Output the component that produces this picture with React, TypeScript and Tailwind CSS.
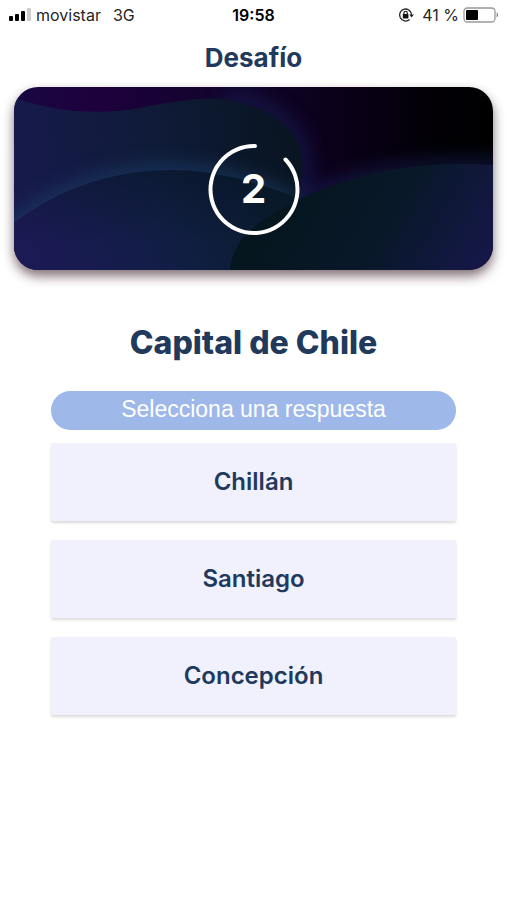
import { useState } from "react";

const answers = ["Chillán", "Santiago", "Concepción"];

const StatusBar = () => {
  return (
    <div className="grid grid-cols-3 items-center h-[30px] pl-2 pr-2 text-base text-neutral-800">
      <div className="flex items-center gap-1 whitespace-nowrap">
        <svg width="24" height="14" viewBox="0 0 24 14" aria-hidden="true">
          <rect x="1" y="8" width="4" height="5" rx="1" fill="#000" />
          <rect x="7" y="6" width="4" height="7" rx="1" fill="#000" />
          <rect x="13" y="3" width="4" height="10" rx="1" fill="#000" />
          <rect x="19" y="0" width="4" height="13" rx="1" fill="#ccc" />
        </svg>
        <span>movistar</span>
        <span className="ml-2">3G</span>
      </div>
      <p className="text-center font-semibold text-black">19:58</p>
      <div className="flex items-center justify-end gap-1 whitespace-nowrap">
        <svg className="mr-1" width="16" height="16" viewBox="0 0 16 16" fill="none" aria-hidden="true">
          <path d="M11.6 12.5A6 6 0 1 1 13.6 8.2" stroke="#222" strokeWidth="1.3" />
          <path d="M11.3 7.6h4.6l-2.3 3z" fill="#222" />
          <rect x="4.8" y="7" width="5.6" height="4.4" rx=".6" fill="#111" />
          <path d="M5.9 7.2V6a1.7 1.7 0 0 1 3.4 0v1.2" stroke="#111" strokeWidth="1.1" />
        </svg>
        <span>41 %</span>
        <svg width="36" height="16" viewBox="0 0 36 16" fill="none" aria-hidden="true">
          <rect x="1" y="1" width="31" height="14" rx="3.5" stroke="#999" strokeWidth="1.3" />
          <rect x="3" y="3" width="12" height="10" rx="1" fill="#000" />
          <path d="M33.6 5.6c2 .6 2 4.2 0 4.8z" fill="#888" />
        </svg>
      </div>
    </div>
  );
};

const Waves = () => {
  return (
    <svg
      className="absolute inset-0 w-full h-full"
      viewBox="0 0 479 183"
      preserveAspectRatio="none"
      aria-hidden="true"
    >
      <defs>
        <linearGradient id="sky" x1="0" y1="0" x2="479" y2="0" gradientUnits="userSpaceOnUse">
          <stop offset="0" stopColor="#190842" />
          <stop offset=".18" stopColor="#1d003c" />
          <stop offset=".45" stopColor="#11052c" />
          <stop offset=".68" stopColor="#0b0019" />
          <stop offset=".88" stopColor="#020006" />
          <stop offset="1" stopColor="#000" />
        </linearGradient>
        <linearGradient id="middle" x1="0" y1="90" x2="290" y2="40" gradientUnits="userSpaceOnUse">
          <stop offset="0" stopColor="#171a4c" />
          <stop offset=".5" stopColor="#0f1b38" />
          <stop offset="1" stopColor="#08141f" />
        </linearGradient>
        <linearGradient id="front" x1="30" y1="183" x2="270" y2="90" gradientUnits="userSpaceOnUse">
          <stop offset="0" stopColor="#1b1a54" />
          <stop offset=".5" stopColor="#111e44" />
          <stop offset="1" stopColor="#091b2a" />
        </linearGradient>
        <linearGradient id="right" x1="280" y1="80" x2="470" y2="190" gradientUnits="userSpaceOnUse">
          <stop offset="0" stopColor="#05161e" />
          <stop offset=".5" stopColor="#091829" />
          <stop offset="1" stopColor="#16174a" />
        </linearGradient>
        <linearGradient id="shade" x1="0" y1="0" x2="0" y2="183" gradientUnits="userSpaceOnUse">
          <stop offset=".4" stopColor="#03101a" stopOpacity=".4" />
          <stop offset=".85" stopColor="#03101a" stopOpacity="0" />
        </linearGradient>
        <filter
          id="soft"
          filterUnits="userSpaceOnUse"
          x="-60"
          y="-60"
          width="620"
          height="300"
          colorInterpolationFilters="sRGB"
        >
          <feGaussianBlur stdDeviation="9" />
        </filter>
      </defs>
      <rect width="479" height="183" fill="url(#sky)" />
      <path
        d="M210 12C250 14 284 36 289 68C292 88 286 108 288 114C330 92 390 76 500 78"
        stroke="#1b2460"
        strokeOpacity=".6"
        strokeWidth="14"
        fill="none"
        filter="url(#soft)"
      />
      <path
        d="M0 11C40 24 80 29 125 21C160 15 180 10 210 12C255 18 290 44 288 78C287 95 284 110 280 183H0Z"
        fill="url(#middle)"
      />
      <path
        d="M-30 160C45 102 95 88 150 86C205 85 245 102 282 116"
        stroke="#1a3b62"
        strokeOpacity=".7"
        strokeWidth="20"
        fill="none"
        filter="url(#soft)"
      />
      <path d="M0 136C45 102 95 84 155 83C210 83 250 99 290 113V183H0Z" fill="url(#front)" />
      <path d="M0 136C45 102 95 84 155 83C210 83 250 99 290 113V183H0Z" fill="url(#shade)" />
      <path d="M216 183C217 166 226 150 246 135C300 100 370 71 479 78V183Z" fill="url(#right)" />
    </svg>
  );
};

const Countdown = ({ seconds }: { seconds: number }) => {
  return (
    <div className="relative grid place-items-center size-[92px]" role="timer">
      <svg className="col-start-1 row-start-1" width="92" height="92" viewBox="0 0 92 92" fill="none" aria-hidden="true">
        <path
          d="M47 3A43.5 43.5 0 1 0 77.5 16.5"
          stroke="#fff"
          strokeWidth="4"
          strokeLinecap="round"
        />
      </svg>
      <span className="col-start-1 row-start-1 text-[40px] leading-none font-bold text-white">{seconds}</span>
    </div>
  );
};

const App = () => {
  const [selected, setSelected] = useState<string | null>(null);

  return (
    <div className="min-h-screen bg-white font-[Inter,sans-serif] text-[#213a5c]">
      <StatusBar />
      <main>
        <h1 className="pt-3 text-center text-[26px] leading-8 font-bold">Desafío</h1>
        <section className="relative mx-[14px] mt-[13px] flex h-[183px] items-center justify-center overflow-hidden rounded-3xl shadow-[0_6px_12px_rgba(45,15,25,0.6)]">
          <Waves />
          <div className="pt-5">
            <Countdown seconds={2} />
          </div>
        </section>
        <h2 className="mt-[53px] text-center text-[32px] leading-10 font-extrabold">Capital de Chile</h2>
        <div className="mx-[10%] mt-7">
          <p className="h-[39px] rounded-full bg-[#9db8e9] text-center font-['Liberation_Sans',sans-serif] text-[23px] leading-9 text-white">
            Selecciona una respuesta
          </p>
          <div className="mt-[13px] flex flex-col gap-[19px]">
            {answers.map((answer) => (
              <button
                key={answer}
                type="button"
                aria-pressed={selected === answer}
                onClick={() => setSelected(answer)}
                className="h-[78px] rounded-xs bg-[#f0f1fc] text-2xl font-semibold shadow-[0_2px_3px_rgba(0,0,0,0.15)]"
              >
                {answer}
              </button>
            ))}
          </div>
        </div>
      </main>
    </div>
  );
};

export default App;
